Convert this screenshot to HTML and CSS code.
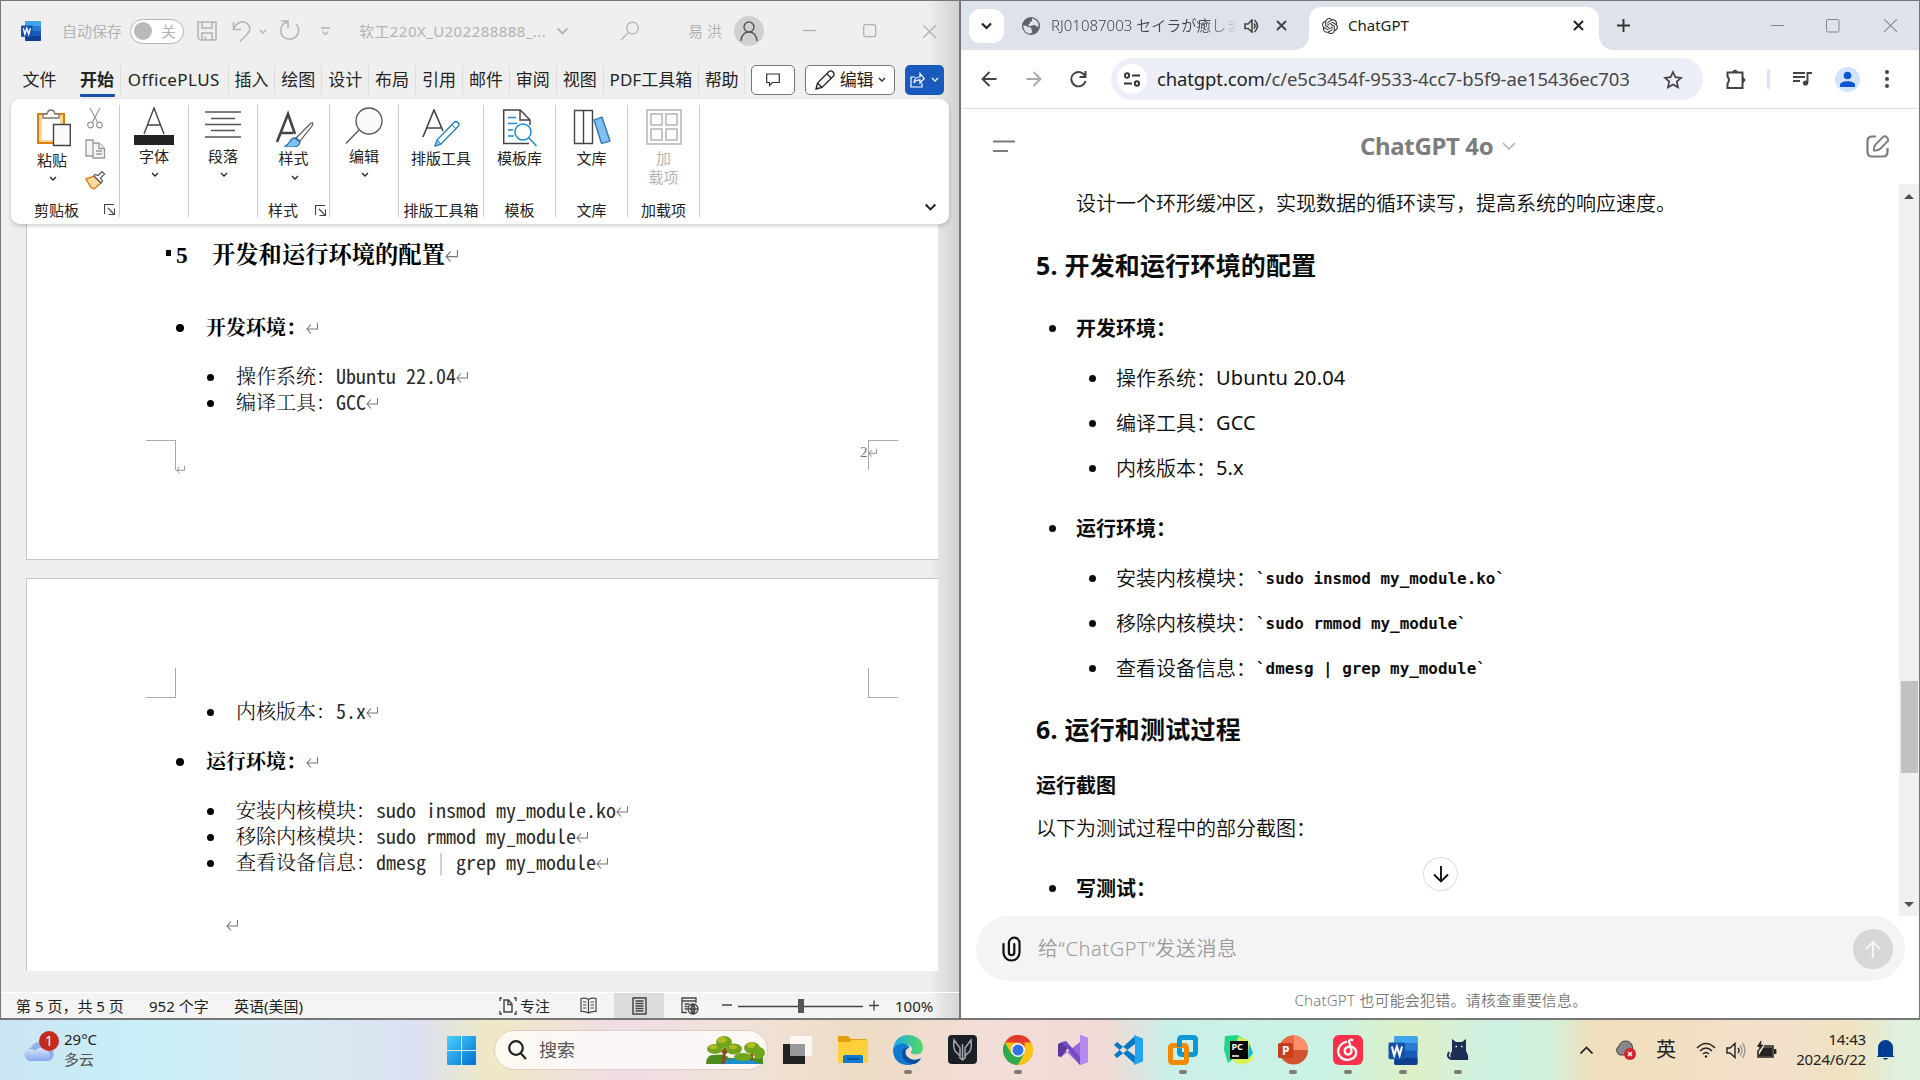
FILE: index.html
```html
<!DOCTYPE html>
<html lang="zh-CN">
<head>
<meta charset="utf-8">
<title>Desktop</title>
<link rel="stylesheet" href="styles.css">
</head>
<body>
<svg class="defs" width="0" height="0">
  <symbol id="ret" viewBox="0 0 12 12"><path d="M11.500 1v6H1M5 2.500L1 7l4 4.500" fill="none" stroke="#777" stroke-width="1.100"/></symbol>
  <symbol id="chev" viewBox="0 0 8 5"><path d="M1 1l3 3 3-3" fill="none" stroke="currentColor" stroke-width="1.300"/></symbol>
  <symbol id="launch" viewBox="0 0 11 11"><path d="M.5 10V.5H10M4 4l6 6M10.500 4.500v6h-6" fill="none" stroke="#444" stroke-width="1.200"/></symbol>
  <symbol id="word" viewBox="0 0 20 20"><rect x="4" width="16" height="20" rx="1.200" fill="#185abd"/><path d="M5.200 0h13.600Q20 0 20 1.200V5H4V1.200Q4 0 5.200 0z" fill="#41a5ee"/><path d="M4 5h16v5H4z" fill="#2b7cd3"/><path d="M4 15h16v3.800q0 1.200-1.200 1.200H5.200Q4 20 4 18.800z" fill="#103f91"/><rect y="4.500" width="11.500" height="11.500" rx="1" fill="#1651aa"/><path d="M2.300 7.300l1.600 6 1.900-6 1.900 6 1.600-6" fill="none" stroke="#fff" stroke-width="1.400"/></symbol>
</svg>
<div class="windows">
  <section class="word">
    <header class="w-title">
      <svg width="20" height="20"><use href="#word"/></svg>
      <span>自动保存</span>
      <span class="toggle"><i></i>关</span>
      <svg width="20" height="20" fill="none" stroke="#b4b4b4" stroke-width="1.500"><path d="M1 1h18v18H3l-2-2zM5 1v6h10V1M5 19v-7h10v7M8.500 19v-3.500"/></svg>
      <svg width="20" height="22" fill="none" stroke="#b4b4b4" stroke-width="1.500"><path d="M1.500 2v7.500H9M1.500 9C5 2 11 0 15 3.500s3.500 7.500 0 11L8 21.500"/></svg>
      <svg class="c" width="8" height="5"><use href="#chev"/></svg>
      <svg width="22" height="22" fill="none" stroke="#b4b4b4" stroke-width="1.500"><path d="M2 1h7v7M8.500 2C3 3 .8 8 2 13c1.500 5 7 7.500 12 5.500 6-2.500 7.500-10 3-14.500"/></svg>
      <svg class="c" width="12" height="9" fill="none" stroke="#b4b4b4" stroke-width="1.300"><path d="M2 1h9M3.500 4.500l3 3 3-3"/></svg>
      <span class="docname">软工220X_U202288888_...</span>
      <svg width="13" height="8"><use href="#chev"/></svg>
      <svg width="20" height="20" fill="none" stroke="#b4b4b4" stroke-width="1.300"><circle cx="12.500" cy="7" r="5.800"/><path d="M8.500 11.500L1 19"/></svg>
      <span class="user">易 洪</span>
      <svg width="30" height="30"><circle cx="15" cy="15" r="15" fill="#d0d0d0"/><g fill="none" stroke="#555" stroke-width="1.400"><circle cx="15" cy="11" r="5"/><path d="M7 25c0-12 16-12 16 0"/></g></svg>
      <svg width="13" height="14" stroke="#b0b0b0" stroke-width="1.300"><path d="M0 6.500h13"/></svg>
      <svg width="14" height="14" fill="none" stroke="#b0b0b0"><rect x=".7" y=".7" width="12" height="12" rx="2" stroke-width="1.300"/></svg>
      <svg width="13" height="13" stroke="#b0b0b0" stroke-width="1.300"><path d="M0 0l13 13M13 0L0 13"/></svg>
    </header>
    <nav class="w-tabs">
      <span class="file">文件</span><span class="cur">开始</span><span class="plus">OfficePLUS</span><span>插入</span><span>绘图</span><span>设计</span><span>布局</span><span>引用</span><span>邮件</span><span>审阅</span><span>视图</span><span class="pdf">PDF工具箱</span><span class="help">帮助</span>
      <b class="btn"><svg width="14" height="14" fill="none" stroke="#333" stroke-width="1.200"><path d="M.7 1h12.600v8.500H6.500l-3 3v-3H.7z"/></svg></b>
      <b class="btn edit"><svg width="21" height="20" fill="none" stroke="#222" stroke-width="1.300"><path d="M1 19l1.500-6L14 1.500q2-1.500 4 .5t.5 4L7 17.500zM12 4l4.500 4.500M2.500 13L7 17.500"/></svg><span>编辑</span><svg width="8" height="5"><use href="#chev"/></svg></b>
      <b class="btn share"><svg width="15" height="16" fill="none" stroke="#fff" stroke-width="1.200"><path d="M5 5H1v10h11v-4M4 11c0-4 2.500-6 6-6V1.500L14.300 6.500 10 11V7.800C7 7.800 5 9 4 11z"/></svg><svg width="8" height="5"><use href="#chev"/></svg></b>
    </nav>
    <div class="ribbon">
      <div class="grp clip">
        <div class="cols">
          <div class="tool"><svg width="36" height="38" fill="none"><path d="M2 5h26v29H2z" fill="#f9d78c" stroke="#e07c12" stroke-width="2"/><path d="M6 8h18v23H6z" fill="#fff"/><path d="M7 9V5h4q1-4 4-4t4 4h4v4z" fill="#fff" stroke="#777" stroke-width="1.300"/><path d="M17.500 15.500h16.800v21H17.500z" fill="#fafafa" stroke="#444" stroke-width="1.400"/></svg><span>粘贴</span><svg class="ch" width="8" height="5"><use href="#chev"/></svg></div>
          <div class="mini">
            <svg width="20" height="21" fill="none" stroke="#999" stroke-width="1.200"><path d="M5 0l8 15M15 0L7 15"/><circle cx="5.500" cy="17" r="2.800"/><circle cx="14.500" cy="17" r="2.800"/></svg>
            <svg width="21" height="21" fill="#f5f5f5" stroke="#999" stroke-width="1.300"><path d="M1 1h7v16H1zM8 4h6l5.500 5.500V19H8z"/><path d="M14 4v5.500h5.500M11 12h6M11 15h6"/></svg>
            <svg width="21" height="20" fill="none"><path d="M1 9l8-3 7 7-7 6-3-1.500z" fill="#fbd9a0" stroke="#df7b12" stroke-width="1.400"/><path d="M9 6l7 7 1.500-2-2-3 4-4-2.500-2.500-4 4-3-1z" fill="#fff" stroke="#555" stroke-width="1.200"/></svg>
          </div>
        </div>
        <footer>剪贴板<svg width="11" height="11"><use href="#launch"/></svg></footer>
      </div>
      <div class="grp g69"><div class="tool up"><svg width="40" height="38"><path d="M10 27L20 1l10 26M13.500 18h13" fill="none" stroke="#444" stroke-width="1.400"/><path d="M0 28h40v10H0z" fill="#222"/></svg><span>字体</span><svg class="ch" width="8" height="5"><use href="#chev"/></svg></div></div>
      <div class="grp g69"><div class="tool up"><svg width="36" height="38" stroke="#555" stroke-width="1.300"><path d="M0 5h36M6 11.500h24M0 17.500h36M6 23.500h24M0 30h36"/></svg><span>段落</span><svg class="ch" width="8" height="5"><use href="#chev"/></svg></div></div>
      <div class="grp g72"><div class="tool"><svg width="40" height="38" fill="none"><path d="M3 33L14 5l7 20M7 24h12" stroke="#444" stroke-width="2.600"/><path d="M37 14q3-1 1 3L26 32l-4-3z" fill="#fff" stroke="#555" stroke-width="1.200"/><path d="M21 29l5 4c-1 6-9 6-15 4 6-2 4-8 10-8z" fill="#83beec" stroke="#1d72b8" stroke-width="1.300"/></svg><span>样式</span><svg class="ch" width="8" height="5"><use href="#chev"/></svg></div><footer>样式<svg width="11" height="11"><use href="#launch"/></svg></footer></div>
      <div class="grp g69"><div class="tool up"><svg width="38" height="38" fill="#fafafa" stroke="#555" stroke-width="1.300"><circle cx="24" cy="14" r="13"/><path d="M14 23L1 36.500"/></svg><span>编辑</span><svg class="ch" width="8" height="5"><use href="#chev"/></svg></div></div>
      <div class="grp g85"><div class="tool"><svg width="38" height="38" fill="none"><path d="M1 28L12 1l9 21M5 19h14" stroke="#444" stroke-width="1.600"/><path d="M33 12.500q4 0 4 4L19 35l-6 2 2-6z" fill="#fff" stroke="#1d7fc4" stroke-width="1.300"/><path d="M15 31l4 4-6 2z" fill="#83beec" stroke="#1d7fc4"/><path d="M30 16l4 4" stroke="#1d7fc4"/></svg><span>排版工具</span></div><footer>排版工具箱</footer></div>
      <div class="grp g72"><div class="tool"><svg width="36" height="38" fill="none"><path d="M27 34.500H1.700V1h16.500L28 11v5M18 1v10h10" stroke="#444" stroke-width="1.500"/><path d="M6 8.500h8M6 14.500h9M6 21h5M6 27h6" stroke="#1d8ad2" stroke-width="1.300"/><circle cx="21" cy="23" r="8" fill="#fff" stroke="#1d8ad2" stroke-width="1.500"/><path d="M27 29l7.500 8" stroke="#1d8ad2" stroke-width="1.500"/></svg><span>模板库</span></div><footer>模板</footer></div>
      <div class="grp g72"><div class="tool"><svg width="38" height="38" fill="none"><path d="M1.500 1.500h9v33h-9zM10.500 1.500h9v33h-9z" stroke="#444" stroke-width="1.400"/><path d="M21 11l8-3 8 24-8.500 2.500z" fill="#83beec" stroke="#1d72b8" stroke-width="1.300"/></svg><span>文库</span></div><footer>文库</footer></div>
      <div class="grp g72"><div class="tool off"><svg width="36" height="38" fill="none" stroke="#b5b5b5" stroke-width="1.500"><path d="M1 1h34v34H1zM5 5h11v11H5zM20 5h11v11H20zM5 20h11v11H5zM20 20h11v11H20z"/></svg><span>加<br>载项</span></div><footer>加载项</footer></div>
      <svg class="fold" width="13" height="8"><use href="#chev"/></svg>
    </div>
    <main class="doc">
      <article class="page p1">
        <h2><i></i><b>5</b>开发和运行环境的配置<svg width="13" height="15"><use href="#ret"/></svg></h2>
        <p class="l1"><i></i>开发环境：<svg width="12" height="12"><use href="#ret"/></svg></p>
        <p class="l2 first"><i></i>操作系统：<code>Ubuntu 22.04</code><svg width="12" height="12"><use href="#ret"/></svg></p>
        <p class="l2"><i></i>编译工具：<code>GCC</code><svg width="12" height="12"><use href="#ret"/></svg></p>
        <div class="foot"><div class="crop tl"></div><svg class="fm" width="9" height="9"><use href="#ret"/></svg><span class="pn">2<svg width="9" height="9"><use href="#ret"/></svg></span><div class="crop tr"></div></div>
      </article>
      <article class="page p2">
        <div class="head"><div class="crop bl"></div><div class="crop br"></div></div>
        <p class="l2 top"><i></i>内核版本：<code>5.x</code><svg width="12" height="12"><use href="#ret"/></svg></p>
        <p class="l1"><i></i>运行环境：<svg width="12" height="12"><use href="#ret"/></svg></p>
        <p class="l2 first"><i></i>安装内核模块：<code>sudo insmod my_module.ko</code><svg width="12" height="12"><use href="#ret"/></svg></p>
        <p class="l2"><i></i>移除内核模块：<code>sudo rmmod my_module</code><svg width="12" height="12"><use href="#ret"/></svg></p>
        <p class="l2"><i></i>查看设备信息：<code>dmesg <em>|</em> grep my_module</code><svg width="12" height="12"><use href="#ret"/></svg></p>
        <p class="end"><svg width="12" height="12"><use href="#ret"/></svg></p>
      </article>
    </main>
    <footer class="status">
      <span>第 5 页，共 5 页</span><span>952 个字</span><span>英语(美国)</span>
      <svg width="18" height="18" fill="none" stroke="#444" stroke-width="1.400"><path d="M3 1H1v3M15 1h2v3M1 14v3h2M17 14v3h-2M5 3h4.500L13 7v8H5zM9 3v4.500h4"/></svg>
      <span>专注</span>
      <svg width="17" height="17" fill="none" stroke="#444" stroke-width="1.200"><path d="M8.500 2.500v13M8.500 2.500Q5 .5 1 1.500v13q4-.5 7.500 1.500 3.500-2 7.500-1.500v-13q-4-1-7.500 1M3 5h3.500M3 8h3.500M3 11h3.500M10.500 5H14M10.500 8H14M10.500 11H14"/></svg>
      <span class="mode"><svg width="15" height="18" fill="none" stroke="#444" stroke-width="1.500"><path d="M1 1h13v16H1zM3.500 4h8M3.500 6.500h8M3.500 9h8M3.500 11.500h8M3.500 14h8"/></svg></span>
      <svg width="18" height="18" fill="none" stroke="#444" stroke-width="1.300"><path d="M6 15.500H1V1h14v5M1 4h14M3.500 7h5M3.500 9.500h3M3.500 12h3"/><circle cx="12" cy="12" r="5"/><path d="M7 12h10M12 7v10M12 7q-4 5 0 10M12 7q4 5 0 10"/></svg>
      <svg width="160" height="20" stroke="#444" stroke-width="1.300"><path d="M0 9h10M16 10.500h125M147 9.500h10M152 4.500v10"/><path d="M79 3v14" stroke="#555" stroke-width="6"/></svg>
      <span>100%</span>
    </footer>
  </section>

  <section class="chrome">
    <header class="strip">
      <span class="drop"><svg width="11" height="8" fill="none" stroke="#222" stroke-width="2.200"><path d="M1 1.500l4.500 4.500L10 1.500"/></svg></span>
      <svg width="18" height="18"><circle cx="9" cy="9" r="9" fill="#5f6368"/><path d="M10 1.500c4 .5 7 4 6.500 8-2 1-2.500-1.500-4.500-1.500s-2 1-4 1-2-2 0-2.500V4.500h2zM1.500 8l5 2q3 0 3 2t1 3q-2 2-3 1.500C4 16 1 13 1.500 8z" fill="#dee2ea"/></svg>
      <span class="t1">RJ01087003 セイラが癒しま</span>
      <svg width="15" height="14" fill="none" stroke="#444" stroke-width="1.600"><path d="M1 5h3l4-4v12L4 9.500H1z" /><path d="M10 4.500q2 2.500 0 5M10.500 1q6 6 0 12"/></svg>
      <svg width="11" height="11" stroke="#444" stroke-width="1.900"><path d="M1 1l9 9M10 1l-9 9"/></svg>
      <div class="active">
        <svg width="16" height="16" viewBox="0 0 24 24" fill="#333"><path d="M22.280 9.820a5.980 5.980 0 0 0-.52-4.910 6.050 6.050 0 0 0-6.510-2.900A6.070 6.070 0 0 0 4.980 4.180a5.980 5.980 0 0 0-4 2.900 6.050 6.050 0 0 0 .74 7.100 5.980 5.980 0 0 0 .51 4.910 6.050 6.050 0 0 0 6.510 2.900A5.980 5.980 0 0 0 13.260 24a6.060 6.060 0 0 0 5.770-4.210 5.990 5.990 0 0 0 4-2.900 6.060 6.060 0 0 0-.75-7.070zm-9.020 12.610a4.480 4.480 0 0 1-2.880-1.040l.14-.08 4.780-2.760a.79.79 0 0 0 .39-.68v-6.740l2.020 1.170v5.630a4.500 4.500 0 0 1-4.450 4.500zM3.600 18.300a4.470 4.470 0 0 1-.53-3.010l.14.080 4.780 2.760a.77.77 0 0 0 .78 0l5.840-3.370v2.330L9.740 19.950A4.500 4.500 0 0 1 3.600 18.300zM2.340 7.900a4.490 4.490 0 0 1 2.370-1.980v5.680a.77.77 0 0 0 .39.680l5.810 3.350-2.020 1.170-4.830-2.790A4.500 4.500 0 0 1 2.340 7.900zm16.600 3.860l-5.840-3.400 2.020-1.160 4.830 2.780a4.490 4.490 0 0 1-.68 8.110v-5.680a.79.79 0 0 0-.4-.65zm2-3.030l-4.920-2.840a.78.78 0 0 0-.78 0L9.400 9.260V6.930l4.830-2.790a4.500 4.500 0 0 1 6.680 4.660zM8.310 12.870l-2.020-1.170V6.070a4.500 4.500 0 0 1 7.380-3.450L8.700 5.460a.79.79 0 0 0-.39.680zM9.400 10.500L12 9l2.600 1.500v3L12 15l-2.600-1.500z"/></svg>
        <span>ChatGPT</span>
        <svg width="11" height="11" stroke="#222" stroke-width="2"><path d="M1 1l9 9M10 1l-9 9"/></svg>
      </div>
      <svg width="13" height="13" stroke="#333" stroke-width="1.900"><path d="M0 6.500h13M6.500 0v13"/></svg>
      <svg width="13" height="13" stroke="#888" stroke-width="1"><path d="M0 6.500h13"/></svg>
      <svg width="14" height="14" fill="none" stroke="#888"><rect x=".5" y=".5" width="12.500" height="12.500" rx="1.500"/></svg>
      <svg width="13" height="13" stroke="#888" stroke-width="1.100"><path d="M0 0l13 13M13 0L0 13"/></svg>
    </header>
    <div class="bar">
      <svg width="16" height="16" fill="none" stroke="#444" stroke-width="1.900"><path d="M15.500 8H2M8.500 1L1.500 8l7 7"/></svg>
      <svg width="16" height="16" fill="none" stroke="#aaa" stroke-width="1.900"><path d="M.5 8H14M7.500 1l7 7-7 7"/></svg>
      <svg width="17" height="17" fill="none" stroke="#444" stroke-width="1.900"><path d="M15 5A7.200 7.200 0 1 0 15.500 10M15.500 0v6h-6"/></svg>
      <div class="omni">
        <span class="site"><svg width="16" height="15" fill="none" stroke="#333" stroke-width="1.900"><circle cx="3" cy="3.500" r="2.200"/><circle cx="13" cy="11.500" r="2.200"/><path d="M8 3.500h8M0 11.500h8"/></svg></span>
        <span class="url"><b>chatgpt.com</b>/c/e5c3454f-9533-4cc7-b5f9-ae15436ec703</span>
        <svg width="20" height="19" fill="none" stroke="#444" stroke-width="1.700"><path d="M10 2l2.400 5.200 5.600.6-4.200 3.800 1.200 5.700-5-2.900-5 2.900 1.200-5.700L2 7.800l5.600-.6z"/></svg>
      </div>
      <svg width="21" height="21" fill="none" stroke="#444" stroke-width="2"><path d="M1.500 3.500h15V19h-15v-4.500q3-3.500 0-7z"/><path d="M6.500 3q2.500-4 5 0zM17 8.500q4 2.500 0 5z" fill="#444" stroke-width="1"/></svg>
      <i class="div"></i>
      <svg width="20" height="16" fill="none" stroke="#444" stroke-width="1.900"><path d="M0 2h12M0 6h12M0 10h7M14.500 12V2H19"/><circle cx="12.500" cy="12" r="2.600" fill="#444" stroke="none"/></svg>
      <svg width="25" height="25"><circle cx="12.500" cy="12.500" r="12.500" fill="#d3e3fd"/><g fill="#0b57d0"><circle cx="12.500" cy="8.500" r="3.800"/><path d="M5 20v-2c0-5 15-5 15 0v2z"/></g></svg>
      <svg width="4" height="18" fill="#444"><circle cx="2" cy="2" r="2"/><circle cx="2" cy="9" r="2"/><circle cx="2" cy="16" r="2"/></svg>
    </div>
    <div class="chat-head">
      <svg width="23" height="15" stroke="#7d7d7d" stroke-width="2.200"><path d="M0 2.500h22M0 12h15"/></svg>
      <h1>ChatGPT 4o</h1>
      <svg class="c" width="14" height="9" fill="none" stroke="#b4b4b4" stroke-width="1.600"><path d="M1 1l6 6 6-6"/></svg>
      <svg width="23" height="23" fill="none" stroke="#7d7d7d" stroke-width="2.200"><path d="M10 1.500H6Q1.500 1.500 1.500 6v11q0 4.500 4.500 4.500h11q4.500 0 4.500-4.500v-4"/><path d="M8 15.500q-.5-4 2-6.500l7-7q2-1.500 4 .5t.5 4l-7 7q-2.500 2.500-6.500 2z" stroke-width="1.900"/></svg>
    </div>
    <div class="scroll">
      <div class="msg">
        <p class="m1">设计一个环形缓冲区，实现数据的循环读写，提高系统的响应速度。</p>
        <h3 class="s1">5. 开发和运行环境的配置</h3>
        <p class="a s2"><i></i><b>开发环境：</b></p>
        <p class="b s3"><i></i>操作系统：<span>Ubuntu 20.04</span></p>
        <p class="b"><i></i>编译工具：<span>GCC</span></p>
        <p class="b"><i></i>内核版本：<span>5.x</span></p>
        <p class="a s4"><i></i><b>运行环境：</b></p>
        <p class="b s3"><i></i>安装内核模块：<code>`sudo insmod my_module.ko`</code></p>
        <p class="b"><i></i>移除内核模块：<code>`sudo rmmod my_module`</code></p>
        <p class="b"><i></i>查看设备信息：<code>`dmesg | grep my_module`</code></p>
        <h3 class="s5">6. 运行和测试过程</h3>
        <h4>运行截图</h4>
        <p class="m2">以下为测试过程中的部分截图：</p>
        <p class="a s4"><i></i><b>写测试：</b></p>
      </div>
      <span class="down"><svg width="16" height="18" fill="none" stroke="#111" stroke-width="1.900"><path d="M8 1v15M1 9.500l7 7 7-7"/></svg></span>
      <div class="track"><svg width="10" height="5"><path d="M0 5l5-5 5 5z" fill="#505050"/></svg><i></i><svg width="10" height="5"><path d="M0 0l5 5 5-5z" fill="#505050"/></svg></div>
    </div>
    <div class="input">
      <svg width="19" height="26" fill="none" stroke="#111" stroke-width="2.200"><path d="M1.500 8v8.500a8 8 0 0 0 16 0V7a5.300 5.300 0 0 0-10.600 0v9.500a2.700 2.700 0 0 0 5.400 0V8" stroke-linecap="round"/></svg>
      <span>给“ChatGPT”发送消息</span>
      <b><svg width="16" height="18" fill="none" stroke="#f4f4f4" stroke-width="2.200"><path d="M8 18V2M1 9l7-7 7 7"/></svg></b>
    </div>
    <p class="note">ChatGPT 也可能会犯错。请核查重要信息。</p>
  </section>
</div>

<footer class="taskbar">
  <span class="weather"><svg width="32" height="32"><defs><linearGradient id="cl" x2="0" y2="1"><stop stop-color="#dbe6fb"/><stop offset="1" stop-color="#86a9ec"/></linearGradient></defs><circle cx="21" cy="16" r="8" fill="#f58a1f"/><path d="M8 27a7 7 0 0 1-1-13.500 9.500 9.500 0 0 1 17 0A7 7 0 0 1 25 27z" fill="#8eb0ee"/><path d="M7 27a6 6 0 1 1 4-10 7 7 0 1 1 13 10z" fill="url(#cl)"/></svg><em>1</em></span>
  <span class="temp">29°C<small>多云</small></span>
  <svg width="29" height="29"><defs><linearGradient id="win" x2="1" y2="1"><stop stop-color="#4cd0ff"/><stop offset="1" stop-color="#006fd0"/></linearGradient></defs><path d="M0 1q0-1 1-1h13v14H0zM15 0h13q1 0 1 1v13H15zM0 15h14v14H1q-1 0-1-1zM15 15h14v13q0 1-1 1H15z" fill="url(#win)"/></svg>
  <div class="search"><svg width="19" height="20" fill="none" stroke="#222" stroke-width="2.200"><circle cx="8" cy="8" r="6.800"/><path d="M13 13.500l5 5.500"/></svg><span>搜索</span>
    <svg class="trees" width="60" height="30"><path d="M1 29q0-10 9-9 10-2 14 3h34v6z" fill="#4c8a1a"/><path d="M14 29q16-9 28-5 7 2 14 5z" fill="#1c8fd0"/><path d="M18 29l2-16M46 25l2-12M20 18l6-6M20 18l-7-5" stroke="#8a4a22" stroke-width="3"/><g fill="#71a51c"><ellipse cx="19" cy="7" rx="8" ry="6"/><ellipse cx="10" cy="14" rx="8" ry="5"/><ellipse cx="29" cy="14" rx="8" ry="5.500"/><ellipse cx="47" cy="13" rx="8" ry="6"/><ellipse cx="54" cy="18" rx="6" ry="6"/><ellipse cx="38" cy="22" rx="9" ry="4"/></g><g fill="#b5bb27"><ellipse cx="17" cy="5" rx="5" ry="3"/><ellipse cx="8" cy="12" rx="4" ry="2"/><ellipse cx="28" cy="12" rx="4" ry="2"/><ellipse cx="46" cy="10" rx="4" ry="3"/></g></svg></div>
  <span class="app"><svg width="30" height="30"><path d="M0 9h22v20H0z" fill="#222"/><path d="M7 1h22v20H7z" fill="#fff" opacity=".75"/><path d="M7 9h15v12H7z" fill="#999"/></svg></span>
  <span class="app"><svg width="30" height="28"><path d="M0 1q0-1 1-1h9l3 3h15q1 0 1 1v6H0z" fill="#e3a008"/><path d="M0 6h11l3-2h16v22q0 1-1 1H1q-1 0-1-1z" fill="#ffd03c"/><path d="M5 27v-6q0-2 2-2h16q2 0 2 2v6z" fill="#0f7ad1"/><path d="M9 23h12" stroke="#064a85" stroke-width="1.500"/></svg></span>
  <span class="app on"><svg width="30" height="30"><defs><linearGradient id="eg"><stop stop-color="#1fa5e6"/><stop offset="1" stop-color="#55dc61"/></linearGradient></defs><path d="M0 15C1 5 7 0 15 0s15 5 15 13c0 6-5 7-10 6-3-1-2-2-1-4 1-4-4-6-8-5S1 14 0 15z" fill="url(#eg)"/><path d="M0 15c2-5 7-7 12-6 4 1 5 3 4 4-4 1-5 6-2 10 4 5 10 3 14 0-3 5-8 7-13 7C6 30 0 24 0 15z" fill="#1079d0"/><path d="M10 14c-3 8 2 15 11 15 4-1 6-4 7-6-5 3-12 2-15-3-1-3-1-5 1-7z" fill="#0b4ea2"/></svg></span>
  <span class="app"><svg width="30" height="30"><rect width="29" height="29" rx="4" fill="#1b1f24"/><g fill="none" stroke="#9ea5ad" stroke-width="1.500"><path d="M6 5q-1 7 1 11l5 5v-8zM23 5q1 7-1 11l-5 5v-8zM14.500 9v16M11 22l3.500 3 3.500-3"/></g></svg></span>
  <span class="app on"><svg width="30" height="30"><circle cx="15" cy="15" r="15" fill="#fbc116"/><path d="M2 7.500A15 15 0 0 1 28 7.500H15z" fill="#e33b2e"/><path d="M2 7.500L8.500 19 15 30A15 15 0 0 1 2 7.500z" fill="#2da94f"/><path d="M28 7.500H15v8z" fill="#e33b2e"/><path d="M21.500 18.500L15 30l-7-11z" fill="#2da94f"/><path d="M15 30l7-12-.5-10.500H28A15 15 0 0 1 15 30z" fill="#fbc116"/><circle cx="15" cy="15" r="7" fill="#fff"/><circle cx="15" cy="15" r="5.500" fill="#2f74ea"/></svg></span>
  <span class="app"><svg width="30" height="30"><path d="M22 0l8 3v24l-8 3L3 11 0 9V21l3 1L22 7z" fill="#9a67d8"/><path d="M0 9l4-2 6 6-7 9-3-1z" fill="#5d3a9e"/><path d="M22 0l8 3v24l-8 3z" fill="#b48af0"/><path d="M10 14L4 7l4-1 14 16v8z" fill="#754cc0"/></svg></span>
  <span class="app"><svg width="30" height="30"><path d="M22 1L1 20l3 3L22 9zM22 29L1 10l3-3 18 14z" fill="#0879c4"/><path d="M21 0l9 3.500v23L21 30l1-8V8z" fill="#27a4ef"/></svg></span>
  <span class="app on"><svg width="30" height="30" fill="none" stroke-width="5"><rect x="11.500" y="2.500" width="16" height="17" rx="2" stroke="#0c97d5"/><rect x="2.500" y="10.500" width="16" height="17" rx="2" stroke="#f28a00"/><path d="M11.500 12V8" stroke="#0c97d5"/></svg></span>
  <span class="app"><svg width="30" height="30"><path d="M1 1l12-1 7 4-4 14-12 10-4-13z" fill="#20d789"/><path d="M14 2l10 3 4 10 1 10-11 5-9-4z" fill="#dff04a"/><path d="M25 8l4 10-5 6z" fill="#0cb8e8"/><path d="M6 6h18v18H6z" fill="#050505"/><path d="M8 21h7" stroke="#fff" stroke-width="1.500"/><text x="7.500" y="15" fill="#fff" font-size="9" font-weight="700">PC</text></svg></span>
  <span class="app on"><svg width="30" height="30"><circle cx="15.500" cy="15" r="14.500" fill="#d35230"/><path d="M15.500.5A14.500 14.500 0 0 1 30 15H15.500z" fill="#ff8f6b"/><path d="M15.500.5v14.500H1A14.500 14.500 0 0 1 15.500.5z" fill="#ed6c47"/><rect y="8" width="15" height="15" rx="1.500" fill="#c43e1c"/><text x="4" y="20" fill="#fff" font-size="12" font-weight="700">P</text></svg></span>
  <span class="app on"><svg width="30" height="30"><rect width="30" height="30" rx="6" fill="#fd3049"/><path d="M14 6.500C5 9 3 17 7.500 22s14 3 15.500-3c1-6-5-9-9.500-6.500-3 2-2 7 1.500 7s4-3 3-6l-2-7q1-3 4-1" fill="none" stroke="#fff" stroke-width="2.300"/></svg></span>
  <span class="app on"><svg width="30" height="29"><use href="#word"/></svg></span>
  <span class="app on"><svg width="30" height="30"><path d="M9 4l4 3h6l4-3v12q3 5 2 9H8Q6 20 9 16z" fill="#1b2f57"/><path d="M8 24q-5-2-2-7" fill="none" stroke="#1b2f57" stroke-width="2"/><path d="M12.500 11.500h1.500M18 11.500h1.500" stroke="#fff" stroke-width="1.500"/></svg></span>
  <svg width="13" height="8" fill="none" stroke="#222" stroke-width="1.700"><path d="M.5 7.500l6-6 6 6"/></svg>
  <svg width="22" height="20"><path d="M5 15A5 5 0 0 1 4 6 7 7 0 0 1 17 5l2 10z" fill="#888" stroke="#444"/><circle cx="15" cy="14" r="6" fill="#d9202a"/><path d="M13 12l4 4M17 12l-4 4" stroke="#fff" stroke-width="1.500"/></svg>
  <span class="ime">英</span>
  <svg width="20" height="17" fill="none" stroke="#222" stroke-width="1.500"><path d="M1 6q9-9 18 0M4 9q6-6 12 0M7 12q3-3 6 0"/><circle cx="10" cy="14.500" r="1.200" fill="#222" stroke="none"/></svg>
  <svg width="20" height="17" fill="none" stroke="#222" stroke-width="1.400"><path d="M1 6h3l5-4.500v14L4 11H1zM12 6q2 2.500 0 5"/><path d="M14 3.500q4 5 0 10M16.500 1q5 7.500 0 15" stroke="#999"/></svg>
  <svg width="21" height="18" fill="none" stroke="#222" stroke-width="1.500"><path d="M8 5h9v11H2V9"/><path d="M8 7h7.500v7.500h-12z" fill="#222"/><path d="M18 8.500h2v4h-2M5 0L1.500 5.500H4L2.500 10 7 4H4.500z" fill="#222" stroke-width=".8"/></svg>
  <span class="clock">14:43<small>2024/6/22</small></span>
  <svg width="17" height="20" fill="#003e92"><path d="M1 16V7.500a7.500 7.500 0 0 1 15 0V16h1v1H0v-1zM5.500 18h6q-3 3.500-6 0z"/></svg>
</footer>
</body>
</html>
```
FILE: styles.css
```css
* { box-sizing: border-box; }
body { margin: 0; width: 1920px; height: 1080px; overflow: hidden; display: flex; flex-direction: column; font: 15px/20px "Noto Sans", "Noto Sans CJK SC", sans-serif; color: #222; }
p, h1, h2, h3, h4 { margin: 0; }
i, em { font-style: normal; }
svg { display: block; flex: none; }
.defs { position: absolute; }
.windows { display: flex; height: 1020px; }
span, p, h1, h2, h3, h4 { white-space: nowrap; }

/* Word window */
.word { width: 960px; border: 1px solid #777; border-width: 1px 1px 2px; background: linear-gradient(90deg, transparent 926px, #0002 960px) #efefef; display: flex; flex-direction: column; }
.w-title { height: 60px; padding-left: 20px; display: grid; grid-template-columns: 42px 67px 67px 35px 26px 21px 39px 42px 196px 64px 69px 45px 69px 60px 60px 35px; align-items: center; color: #b4b4b4; }
.w-title > span:not(.toggle) { margin-left: -1px; }
.toggle { width: 54px; height: 25px; border: 1.5px solid #b4b4b4; border-radius: 13px; background: #fff; display: flex; align-items: center; gap: 9px; padding-left: 3px; line-height: 20px; }
.toggle i { width: 18px; height: 18px; border-radius: 50%; background: #b9b9b9; }
.w-title .c { margin-left: 1px; }
.docname { letter-spacing: .43px; }
.w-tabs { height: 35px; display: flex; align-items: center; margin-top: 1px; font-size: 17px; }
.w-tabs > span { width: 46.9px; height: 30px; line-height: 30px; text-align: center; border-right: 1px solid #ddd; }
.w-tabs .file { width: 77px; border: 0; padding-right: 0; }
.w-tabs .cur { width: 43px; font-weight: 700; border-right: 1px solid #ddd; position: relative; text-align: left; padding-left: 2px; }
.w-tabs .cur::after { content: ""; position: absolute; left: 2px; bottom: -2px; width: 35px; height: 3px; background: #1750a8; border-radius: 1px; }
.w-tabs .plus { width: 107.5px; letter-spacing: .4px; padding-right: 1px; }
.w-tabs .pdf { width: 95.5px; }
.w-tabs .help { width: 46px; }
.btn { display: flex; align-items: center; justify-content: center; width: 44px; height: 30px; border: 1px solid #777; border-radius: 5px; background: #fff; margin-left: 6px; font-weight: 400; }
.btn.edit { width: 90px; margin-left: 10px; gap: 4px; }
.btn.share { width: 39px; margin-left: 10px; background: #185abd; border: 0; color: #fff; gap: 6px; }
.ribbon { position: relative; z-index: 2; height: 125px; flex: none; margin: 2px 10px 0 10px; border-radius: 9px; background: #fff; box-shadow: 0 2px 4px #0003; display: flex; padding-top: 6px; }
.grp { height: 112px; border-right: 1px solid #ccc; display: flex; flex-direction: column; justify-content: space-between; }
.clip { width: 109px; }
.g69 { width: 69px; } .g72 { width: 72px; } .g85 { width: 85px; }
.cols { display: flex; padding-left: 24px; }
.clip .tool { width: 38px; }
.tool { display: flex; flex-direction: column; align-items: center; padding-top: 4px; }
.tool.up { padding-top: 2px; }
.tool span { line-height: 19px; margin-top: 2px; text-align: center; }
.clip .tool span { margin: 4px 0 0 -4px; }
.g72 .tool .ch { margin-top: 7px; }
.ch { margin: 6px 0 0 2px; }
.clip .ch { margin-left: -2px; }
.off { color: #b5b5b5; }
.mini { margin-left: 12px; padding-top: 3px; display: grid; gap: 10px; }
.grp footer { display: flex; justify-content: center; height: 17px; line-height: 20px; align-items: center; margin-bottom: -1px; }
.clip footer { padding-left: 19px; gap: 25px; }
.g72 footer svg { margin: 2px 0 0 17px; }
.g72 footer:has(svg) { justify-content: flex-start; padding-left: 10px; }
.fold { margin: 98px 0 0 224px; }
.doc { height: 766px; display: flex; flex-direction: column; gap: 18px; font-family: "Liberation Serif", "Noto Serif CJK SC", "Noto Sans CJK SC", serif; color: #000; font-weight: 300; }
.page { width: 912px; margin-left: 25px; border: 1px solid #c8c8c8; border-right: 0; background: #fff; flex: none; }
.p1 { height: 336px; border-top: 0; padding-top: 16px; }
.p2 { height: 393px; border-bottom: 0; }
.page h2 { display: flex; align-items: center; height: 30px; font-size: 23.3px; line-height: 30px; font-weight: 700; padding-left: 139px; }
.page h2 i { width: 5px; height: 6px; background: #000; margin: -4px 5px 0 0; }
.page h2 b { width: 36px; }
.l1, .l2 { display: flex; align-items: center; height: 26px; font-size: 20px; line-height: 26px; }
.l1 { font-weight: 700; padding-left: 149px; margin-top: 45px; }
.l1 i { width: 8px; height: 8px; border-radius: 50%; background: #000; margin-right: 22px; }
.l2 { padding-left: 180px; }
.l2 i { width: 7px; height: 7px; border-radius: 50%; background: #000; margin-right: 22px; }
.l2.first { margin-top: 23px; }
.l2.top { margin-top: 1px; }
.p2 .l1 { margin-top: 24px; }
.page code { font: 20px/26px "Noto Sans Mono CJK SC", monospace; font-weight: 300; white-space: pre; margin-top: -3px; color: #2a2a2a; }
.page em { color: #bbb; }
.foot { display: flex; margin-top: 24px; padding-left: 119px; height: 30px; font-size: 15px; }
.crop { width: 30px; height: 30px; border: 0 solid #aaa; }
.tl { border-width: 1px 1px 0 0; } .tr { border-width: 1px 0 0 1px; }
.bl { border-width: 0 1px 1px 0; } .br { border-width: 0 0 1px 1px; }
.fm { margin: 25px 675px 0 0; }
.pn { display: flex; width: 8px; align-items: center; height: 24px; color: #777; }
.foot .tr { margin-left: 0; }
.head { display: flex; justify-content: space-between; width: 871px; padding: 89px 0 0 119px; }
.end { padding: 43px 0 0 199px; }
.status { position: relative; height: 26px; margin-top: auto; border-top: 1px solid #fff; background: linear-gradient(90deg, transparent 926px, #0002 960px) #f4f4f4; display: grid; grid-template-columns: 133px 85px 265px 21px 60px 34px 67px 41px 173px 60px; padding-left: 15px; align-items: center; }
.mode { width: 50px; height: 25px; background: #dcdcdc; display: flex; align-items: center; justify-content: center; }

/* Browser window */
.chrome { width: 960px; border: 1px solid #777; border-width: 1px 1px 2px; background: #fff; display: flex; flex-direction: column; }
.strip { height: 49px; background: #dee2ea; display: grid; grid-template-columns: 53px 30px 192px 32px 33px 308px 154px 55px 58px 30px; padding-left: 8px; align-items: center; color: #444; }
.drop { width: 35px; height: 34px; border-radius: 11px; background: #fff; display: flex; align-items: center; justify-content: center; }
.t1 { width: 184px; margin: -1px 0 0 -1px; overflow: hidden; font-family: "Noto Sans", "Noto Sans CJK JP", sans-serif; font-weight: 350; mask-image: linear-gradient(90deg, #000 155px, transparent 186px); }
.active { position: relative; width: 290px; height: 43px; align-self: end; background: #fff; border-radius: 12px 12px 0 0; display: flex; align-items: center; padding: 0 15px 6px 13px; gap: 10px; color: #222; }
.active span { margin-top: -2px; }
.active svg:last-child { margin-left: auto; }
.active::before, .active::after { content: ""; position: absolute; bottom: 0; width: 14px; height: 14px; }
.active::before { left: -14px; background: radial-gradient(circle at 0 0, transparent 13.5px, #fff 14px); }
.active::after { right: -14px; background: radial-gradient(circle at 100% 0, transparent 13.5px, #fff 14px); }
.bar { height: 59px; border-bottom: 1px solid #ddd; display: grid; grid-template-columns: 45px 44px 41px 615px 41px 26px 42px 50px 20px; padding-left: 20px; align-items: center; }
.omni { width: 592px; height: 42px; border-radius: 21px; background: #eceef8; display: flex; align-items: center; padding: 0 20px 0 6px; }
.omni > svg { margin-left: auto; }
.site { width: 30px; height: 30px; border-radius: 50%; background: #fff; display: flex; align-items: center; justify-content: center; }
.url { font-size: 18.5px; letter-spacing: -.13px; margin-left: 10px; color: #474747; line-height: 28px; }
.url b { font-weight: 400; color: #1f1f1f; }
.div { width: 3px; height: 20px; background: #d3e3fd; border-radius: 2px; }
.chat-head { height: 75px; display: grid; grid-template-columns: 367px 142px 364px 30px; padding-left: 32px; align-items: center; }
.chat-head h1 { font-size: 24px; line-height: 34px; margin-top: -2px; color: #7d7d7d; font-weight: 700; letter-spacing: -.35px; }
.scroll { position: relative; height: 732px; display: flex; justify-content: space-between; overflow: hidden; color: #0d0d0d; }
.msg { padding: 5px 0 0 75px; font-size: 20px; line-height: 28px; font-weight: 350; }
.msg b, .msg h3, .msg h4 { font-weight: 700; }
.msg p { display: flex; align-items: center; height: 28px; padding-top: 2px; }
.msg .m1 { padding-left: 40px; }
.msg h3 { font-size: 25px; line-height: 32px; height: 32px; letter-spacing: .2px; }
.msg .s1 { margin-top: 32px; }
.msg .s2 { margin-top: 33px; }
.msg .b { padding-left: 53px; margin-top: 17px; }
.msg .b.s3 { margin-top: 22px; }
.msg .s4 { margin-top: 32px; }
.msg .s5 { margin-top: 31px; }
.msg h4 { font-size: 20px; margin-top: 26px; padding-top: 1px; height: 28px; }
.msg .m2 { margin-top: 15px; }
.msg .a { padding-left: 13px; }
.msg p i { width: 7px; height: 7px; border-radius: 50%; background: #0d0d0d; margin: -2px 20px 0 0; }
.msg p span { font-weight: 400; letter-spacing: .15px; margin-top: -2px; }
.msg code { font: 700 15.92px/28px "DejaVu Sans Mono", monospace; }
.down { position: absolute; left: 462px; top: 673px; width: 35px; height: 34px; border: 1px solid #ddd; border-radius: 50%; background: #fff; display: flex; align-items: center; justify-content: center; }
.track { width: 20px; background: #f0f0f0; display: flex; flex-direction: column; align-items: center; justify-content: space-between; padding: 10px 0 9px; }
.track i { width: 17px; height: 92px; background: #c1c1c1; margin-top: 353px; }
.input { width: 929px; height: 65px; margin-left: 15px; background: #f4f4f4; border-radius: 33px; display: flex; align-items: center; padding: 0 12px 0 26px; font-size: 20px; line-height: 28px; color: #9b9b9b; font-weight: 350; }
.input span { margin-left: 17px; letter-spacing: .6px; }
.input b { width: 40px; height: 40px; border-radius: 50%; background: #d7d7d7; display: flex; align-items: center; justify-content: center; margin-left: auto; }
.note { text-align: center; margin: 8px 0 0 2px; line-height: 22px; color: #777; font-size: 15px; font-weight: 350; letter-spacing: .22px; }

/* Taskbar */
.taskbar { height: 60px; padding-left: 24px; display: grid; grid-template-columns: 40px 383px 47px 289px 55px 55px 55px 55px 55px 55px 55px 56px 54px 55px 55px 55px 137px 35px 41px 40px 30px 30px 21px 100px 30px; align-items: center; background: linear-gradient(90deg, #cbe5f3 0, #c8eff7 140px, #d8ebf4 280px, #dce0f0 420px, #efe9c4 490px, #f0dce4 620px, #f0e2d8 740px, #eddcc5 860px, #f2ddd9 1000px, #efdad5 1110px, #c9efe9 1170px, #cbf2e4 1330px, #def0c6 1410px, #cef1e2 1490px, #d2f1dc 1550px, #f0dfbb 1590px, #f2e0cb 1780px, #efe2c0 1850px, #dff0df 1900px); }
.weather { position: relative; }
.weather em { position: absolute; left: 15px; top: -3px; width: 20px; height: 20px; border-radius: 50%; background: #c42b1c; color: #fff; text-align: center; font-size: 14px; }
.temp, .clock { line-height: 20px; margin-top: -2px; }
.temp small, .clock small { display: block; font-size: 15px; }
.temp small { color: #555; }
.clock { text-align: right; width: 89px; letter-spacing: -.15px; }
.search { width: 274px; height: 40px; border: 1px solid #dccfc9; border-radius: 20px; background: rgba(255,255,255,.75); display: flex; align-items: center; padding: 0 2px 0 13px; font-size: 18px; color: #555; gap: 12px; }
.trees { margin-left: auto; }
.app { position: relative; width: 30px; height: 60px; display: flex; align-items: center; }
.app.on::after { content: ""; position: absolute; left: 11px; bottom: 6px; width: 8px; height: 4px; border-radius: 2px; background: #7e7a78; }
.ime { font-size: 20px; line-height: 28px; }
```
